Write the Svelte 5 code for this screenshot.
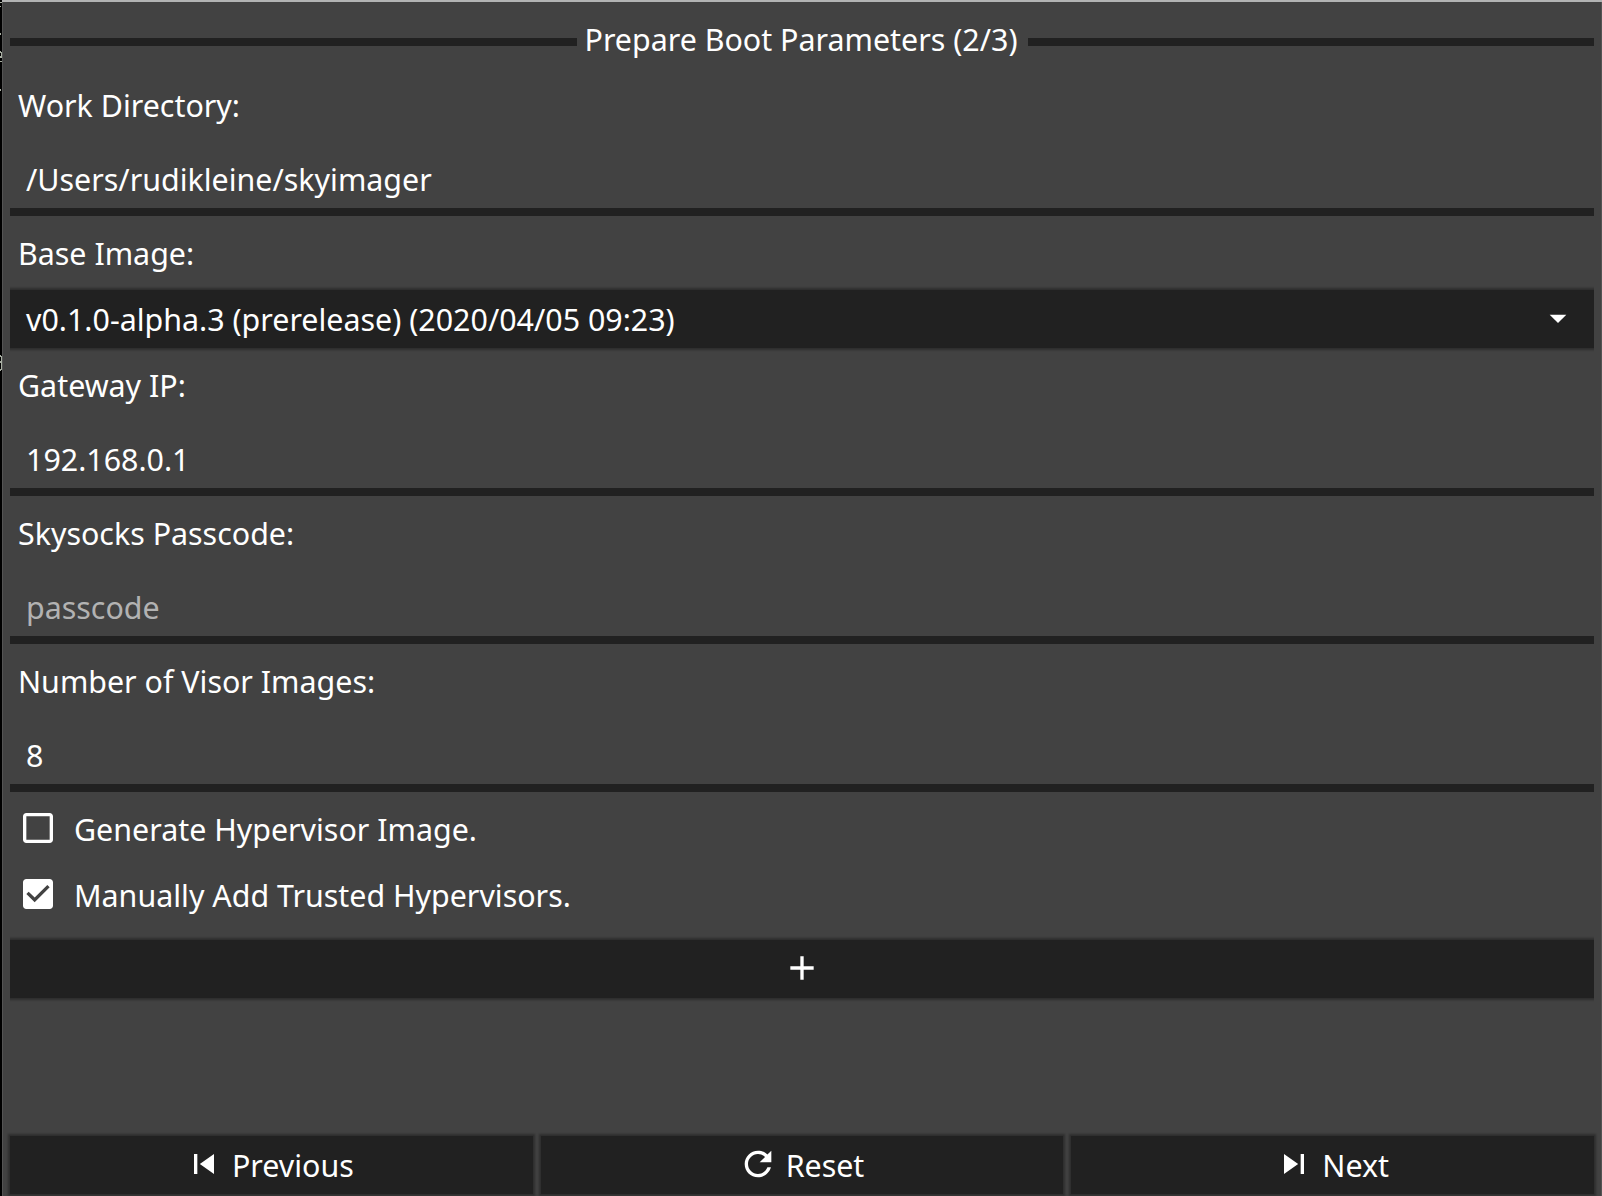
<script>
  let workDir = $state('/Users/rudikleine/skyimager');
  let gateway = $state('192.168.0.1');
  let passcode = $state('');
  let imageCount = $state('8');

  const checks = [
    { label: 'Generate Hypervisor Image.', on: false },
    { label: 'Manually Add Trusted Hypervisors.', on: true },
  ];

  const icons = {
    previous: 'M6 6h2v12H6zm3.5 6l8.5 6V6z',
    reset:
      'M17.65 6.35C16.2 4.9 14.21 4 12 4c-4.42 0-7.99 3.58-7.99 8s3.57 8 7.99 8c3.73 0 6.84-2.55 7.73-6h-2.08c-.82 2.33-3.04 4-5.65 4-3.31 0-6-2.69-6-6s2.69-6 6-6c1.66 0 3.14.69 4.22 1.78L13 11h7V4l-2.35 2.35z',
    next: 'M6 18l8.5-6L6 6v12zM16 6v12h2V6h-2z',
    add: 'M19 13h-6v6h-2v-6H5v-2h6V5h2v6h6v2z',
    drop: 'M7 10l5 5 5-5z',
    on: 'M19 3H5c-1.11 0-2 .9-2 2v14c0 1.1.89 2 2 2h14c1.11 0 2-.9 2-2V5c0-1.1-.89-2-2-2zm-9 14l-5-5 1.41-1.41L10 14.17l7.59-7.59L19 8l-9 9z',
    off: 'M19 5v14H5V5h14m0-2H5c-1.1 0-2 .9-2 2v14c0 1.1.9 2 2 2h14c1.1 0 2-.9 2-2V5c0-1.1-.9-2-2-2z',
  };
</script>

{#snippet icon(name)}
  <svg class="icon" viewBox="0 0 24 24" aria-hidden="true"><path d={icons[name]} /></svg>
{/snippet}

<div class="desktop">
  <!-- slivers of the terminal behind the window -->
  <svg class="behind" viewBox="0 0 2 400" aria-hidden="true">
    <path d="M0 2h2v1H0zM0 6h1v1H0zM0 33h1v2H0zM0 51h1v2H0zM1 52h1v4H1zM0 56h2v2H0zM0 61h2v1H0zM0 89h1v2H0zM0 355h1v2H0zM1 356h1v14H1zM0 361h1v2H0zM0 369h1v2H0z" />
  </svg>
  <main class="window">
    <header class="title">
      <span class="rule"></span>
      <h1>Prepare Boot Parameters (2/3)</h1>
      <span class="rule"></span>
    </header>

    <label class="label" for="dir">Work Directory:</label>
    <input class="entry" id="dir" bind:value={workDir} />

    <span class="label">Base Image:</span>
    <button class="button select">
      <span>v0.1.0-alpha.3 (prerelease) (2020/04/05 09:23)</span>
      {@render icon('drop')}
    </button>

    <label class="label" for="gw">Gateway IP:</label>
    <input class="entry" id="gw" bind:value={gateway} />

    <label class="label" for="pass">Skysocks Passcode:</label>
    <input class="entry" id="pass" placeholder="passcode" bind:value={passcode} />

    <label class="label" for="count">Number of Visor Images:</label>
    <input class="entry" id="count" bind:value={imageCount} />

    {#each checks as check}
      <div class="check" role="checkbox" aria-checked={check.on} tabindex="0">
        {@render icon(check.on ? 'on' : 'off')}
        <span>{check.label}</span>
      </div>
    {/each}

    <button class="button add" aria-label="Add">{@render icon('add')}</button>

    <footer class="actions">
      <button class="button previous">{@render icon('previous')}<span>Previous</span></button>
      <button class="button reset">{@render icon('reset')}<span>Reset</span></button>
      <button class="button next">{@render icon('next')}<span>Next</span></button>
    </footer>
  </main>
</div>

<style>
  :global(body) {
    overflow: hidden;
  }
  .desktop {
    position: relative;
    box-sizing: border-box;
    width: 1602px;
    height: 1196px;
    padding: 2px 0 0 2px;
    background: linear-gradient(#b2b3b3, #b2b3b3) 2px 0 / 100% 2px no-repeat #000;
    font-family: 'Noto Sans', sans-serif;
    font-size: 30.4px;
    line-height: 42px;
    color: #fff;
  }
  .behind {
    position: absolute;
    left: 0;
    top: 0;
    width: 2px;
    height: 400px;
    fill: #a9afa3;
  }
  .window {
    box-sizing: border-box;
    height: 1194px;
    padding: 8px 7px 2px;
    border: 0 solid #545454;
    border-width: 0 1px;
    background: #424242;
    display: flex;
    flex-direction: column;
    gap: 8px;
  }
  .title,
  .label,
  .check,
  .button,
  .entry {
    box-sizing: border-box;
    flex: none;
    height: 58px;
    display: flex;
    align-items: center;
    white-space: pre;
  }
  h1 {
    margin: 0;
    padding: 2px 10px 0 8px;
    font: inherit;
  }
  .rule {
    flex: 1;
    height: 8px;
    margin-top: 6px;
    background: #212121;
  }
  .label {
    padding: 2px 8px 0;
  }
  .check span,
  .button span {
    padding-top: 2px;
  }
  .entry {
    width: 100%;
    height: 74px;
    padding: 8px 16px 0;
    margin: 0;
    border: 0;
    border-bottom: 8px solid #212121;
    border-radius: 0;
    outline: none;
    background: none;
    color: #fff;
    font: inherit;
  }
  .entry::placeholder {
    color: #b2b2b2;
    opacity: 1;
  }
  .check {
    padding: 0 8px;
    gap: 16px;
  }
  .icon {
    flex: none;
    width: 40px;
    height: 40px;
    margin-top: -2px;
    fill: #fff;
  }
  .button {
    margin: 0;
    padding: 0 16px;
    border: 0;
    justify-content: center;
    gap: 8px;
    background: #212121;
    color: #fff;
    font: inherit;
    box-shadow: 0 0 2px 2px rgba(0, 0, 0, 0.3);
  }
  .select,
  .add {
    clip-path: inset(-6px 0);
  }
  .select {
    justify-content: space-between;
  }
  .add {
    margin-top: 8px;
  }
  .actions {
    margin-top: auto;
    display: grid;
    grid-template-columns: repeat(3, 1fr);
    gap: 8px;
  }
  .previous {
    padding-right: 21px;
  }
  .reset {
    gap: 8px;
    padding-right: 18px;
  }
  .next {
    padding-right: 18px;
  }
</style>
